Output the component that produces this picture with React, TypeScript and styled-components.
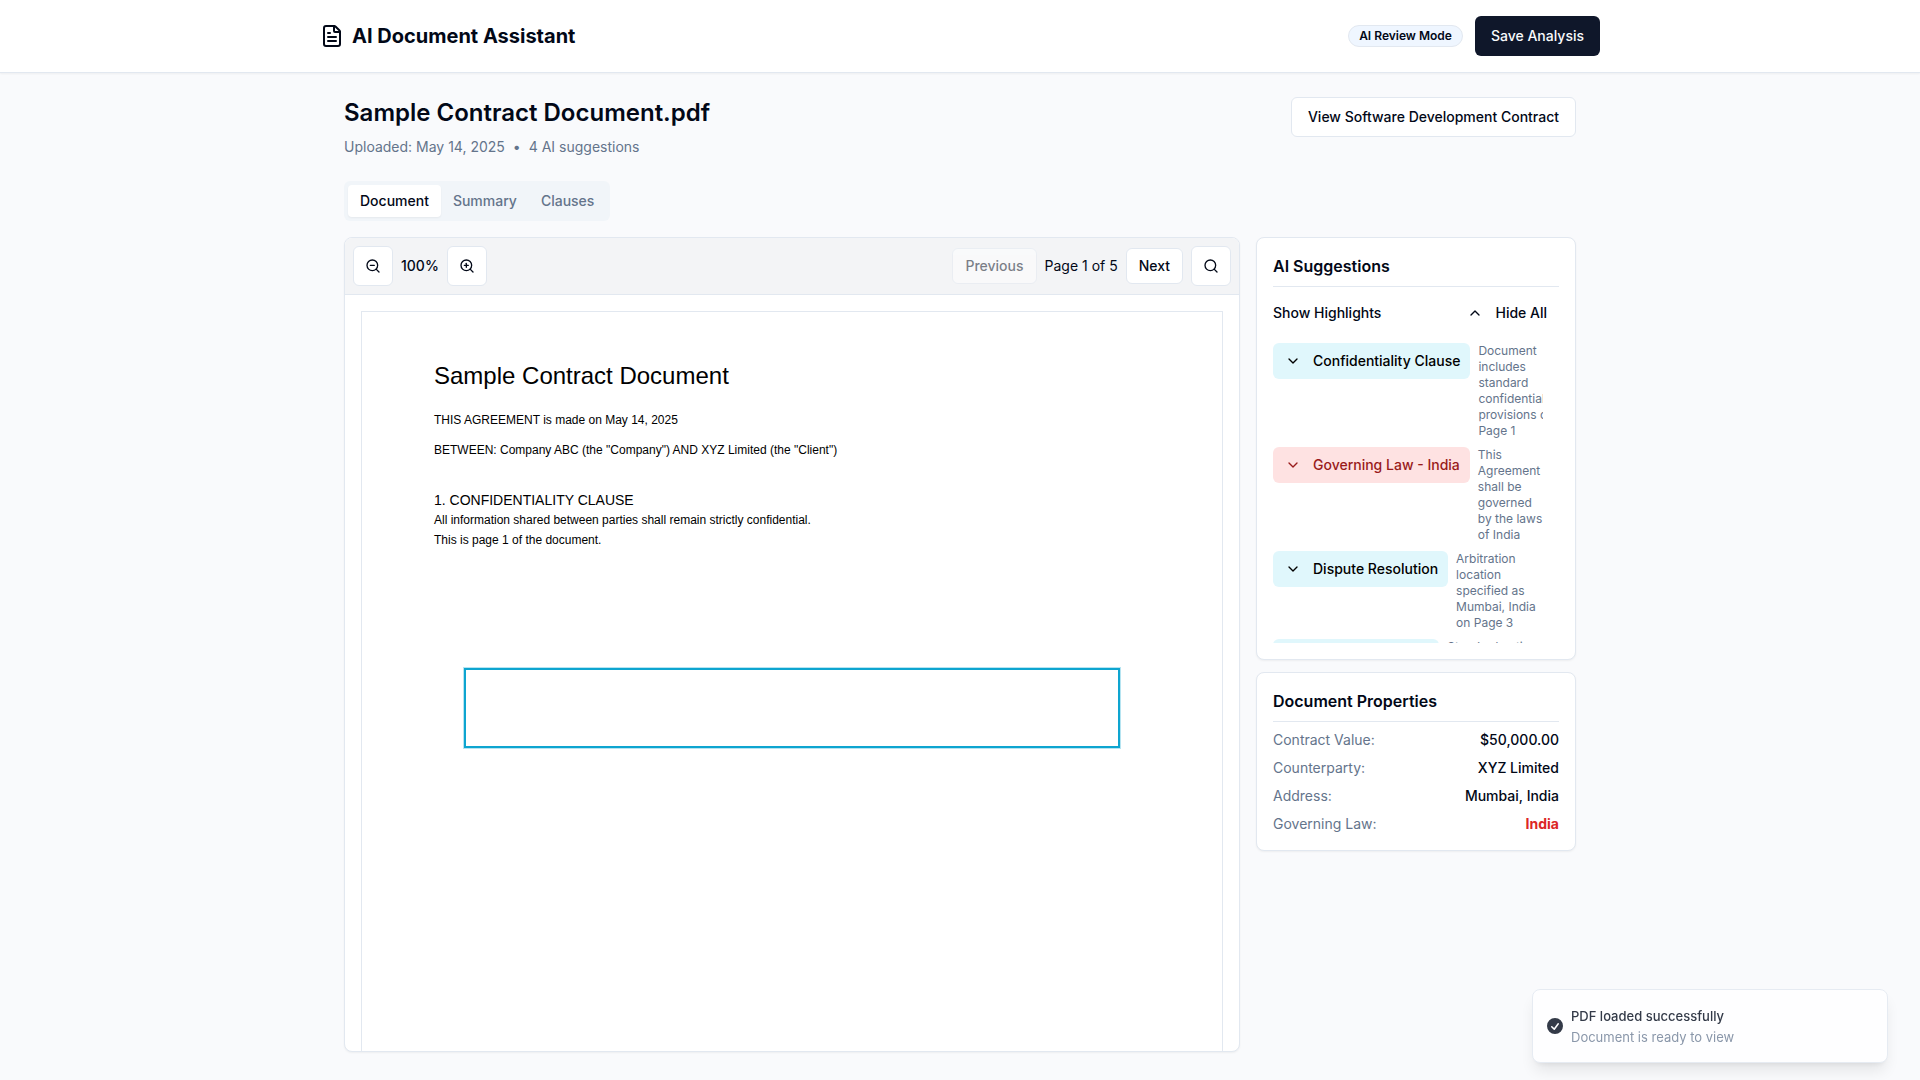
import React from "react";
import styled, { createGlobalStyle, css } from "styled-components";
import { ChevronDown, ChevronUp, FileText, Search, ZoomIn, ZoomOut } from "lucide-react";

const color = {
  page: "#f9fafc",
  surface: "#ffffff",
  ink: "#020817",
  navy: "#0f172a",
  muted: "#64748b",
  mutedSurface: "#f1f5f9",
  toolbar: "#f3f4f6",
  border: "#e2e8f0",
  badge: "#eff6ff",
  aqua: "#e0f7fc",
  rose: "#fee2e2",
  roseInk: "#991b1b",
  danger: "#dc2626",
  highlight: "#0ea5d0",
};

const GlobalStyle = createGlobalStyle`
  *, *::before, *::after { box-sizing: border-box; }
  body {
    margin: 0;
    background: ${color.page};
    color: ${color.ink};
    font-family: Inter, "Liberation Sans", sans-serif;
    font-size: 14px;
    line-height: 20px;
  }
  h1, h2, h3, p, dl, dd, ul { margin: 0; padding: 0; }
  button { font: inherit; color: inherit; cursor: pointer; }
`;

const Header = styled.header`
  background: ${color.surface};
  border-bottom: 1px solid ${color.border};
  box-shadow: 0 1px 2px rgba(0, 0, 0, 0.05);
`;

const HeaderInner = styled.div`
  display: flex;
  align-items: center;
  justify-content: space-between;
  max-width: 1280px;
  margin: 0 auto;
  padding: 16px 0;
`;

const Brand = styled.div`
  display: flex;
  align-items: center;
  gap: 8px;
`;

const BrandName = styled.h1`
  font-size: 20px;
  line-height: 28px;
  font-weight: 700;
`;

const HeaderActions = styled.div`
  display: flex;
  align-items: center;
  gap: 12px;
`;

const Badge = styled.span`
  padding: 2px 10px;
  border: 1px solid ${color.border};
  border-radius: 999px;
  background: ${color.badge};
  font-size: 12px;
  line-height: 16px;
  font-weight: 600;
`;

type Variant = "primary" | "outline" | "ghost" | "aqua" | "rose";

const variants = {
  primary: css`
    background: ${color.navy};
    border: 0;
    color: #f8fafc;
  `,
  outline: css`
    background: ${color.surface};
    border: 1px solid ${color.border};
  `,
  ghost: css`
    background: transparent;
    border: 0;
  `,
  aqua: css`
    background: ${color.aqua};
    border: 0;
    color: #000000;
  `,
  rose: css`
    background: ${color.rose};
    border: 0;
    color: ${color.roseInk};
  `,
};

const Button = styled.button<{ $variant: Variant; $size?: "small" | "regular" | "icon" }>`
  display: inline-flex;
  align-items: center;
  justify-content: center;
  flex-shrink: 0;
  gap: 12px;
  width: ${({ $size }) => ($size === "icon" ? "40px" : "auto")};
  height: ${({ $size }) => ($size === "small" ? "36px" : "40px")};
  padding: 0 ${({ $size }) => ($size === "icon" ? "0" : $size === "small" ? "12px" : "16px")};
  border-radius: 6px;
  font-weight: 500;
  white-space: nowrap;
  ${({ $variant }) => variants[$variant]}

  &:disabled {
    opacity: 0.5;
    cursor: default;
  }
`;

const SuggestionButton = styled(Button)`
  padding-right: 10px;
`;

const Main = styled.main`
  max-width: 1280px;
  margin: 0 auto;
  padding: 24px;
`;

const TitleRow = styled.div`
  display: flex;
  align-items: flex-start;
  justify-content: space-between;
  margin-bottom: 24px;
`;

const TitleBlock = styled.div`
  display: flex;
  flex-direction: column;
  gap: 8px;
`;

const DocumentTitle = styled.h2`
  font-size: 24px;
  line-height: 32px;
  font-weight: 600;
`;

const Meta = styled.p`
  display: flex;
  gap: 8px;
  color: ${color.muted};
`;

const TabList = styled.div`
  display: inline-flex;
  padding: 4px;
  margin-bottom: 16px;
  border-radius: 6px;
  background: ${color.mutedSurface};
  vertical-align: top;
`;

const Tab = styled.button<{ $active?: boolean }>`
  padding: 6px 12px;
  border: 0;
  border-radius: 4px;
  background: ${({ $active }) => ($active ? color.surface : "transparent")};
  box-shadow: ${({ $active }) => ($active ? "0 1px 2px rgba(0, 0, 0, 0.05)" : "none")};
  color: ${({ $active }) => ($active ? color.ink : color.muted)};
  font-weight: 500;
`;

const Workspace = styled.div`
  display: flex;
  align-items: flex-start;
  gap: 16px;
`;

const Card = styled.section`
  border: 1px solid ${color.border};
  border-radius: 8px;
  background: ${color.surface};
  box-shadow: 0 1px 2px rgba(0, 0, 0, 0.05);
`;

const Viewer = styled(Card)`
  display: flex;
  flex: 1;
  flex-direction: column;
  min-width: 0;
  height: calc(100vh - 265px);
  overflow: hidden;
`;

const Toolbar = styled.div`
  display: flex;
  align-items: center;
  justify-content: space-between;
  padding: 8px;
  border-bottom: 1px solid ${color.border};
  background: ${color.toolbar};
`;

const ToolGroup = styled.div`
  display: flex;
  align-items: center;
  gap: 8px;
`;

const ZoomLevel = styled.span`
  font-weight: 500;
`;

const PageScroller = styled.div`
  flex: 1;
  padding: 16px;
  overflow: auto;
  scrollbar-width: none;
`;

const Page = styled.article`
  position: relative;
  min-height: 1114px;
  padding: 48px 72px;
  border: 1px solid ${color.border};
  background: ${color.surface};
  color: #000000;
  font-family: "Liberation Sans", Arial, sans-serif;
  font-size: 12px;
  line-height: 20px;
`;

const PageTitle = styled.h3`
  margin-bottom: 18px;
  font-size: 24px;
  line-height: 32px;
  font-weight: 400;
`;

const Paragraph = styled.p`
  margin-bottom: 10px;
`;

const Clause = styled.div`
  padding-top: 20px;
`;

const ClauseTitle = styled.h3`
  font-size: 14px;
  line-height: 20px;
  font-weight: 400;
`;

const Highlight = styled.div`
  position: absolute;
  top: 356px;
  left: 102px;
  right: 102px;
  height: 80px;
  border: 2px solid ${color.highlight};
  box-shadow: 0 0 0 1px rgba(14, 165, 208, 0.3);
`;

const Sidebar = styled.aside`
  display: flex;
  flex-direction: column;
  flex-shrink: 0;
  gap: 12px;
  width: 320px;
`;

const Panel = styled(Card)`
  padding: 16px;
`;

const PanelTitle = styled.h3`
  padding-bottom: 8px;
  margin-bottom: 8px;
  border-bottom: 1px solid ${color.border};
  font-size: 16px;
  line-height: 24px;
  font-weight: 600;
`;

const HighlightRow = styled.div`
  display: flex;
  align-items: center;
  justify-content: space-between;
  margin-bottom: 12px;
  font-weight: 500;
`;

const SuggestionViewport = styled.div`
  height: 300px;
  margin-right: 16px;
  overflow: hidden;
`;

const SuggestionList = styled.ul`
  display: flex;
  flex-direction: column;
  gap: 8px;
  list-style: none;
`;

const Suggestion = styled.li`
  display: flex;
  align-items: flex-start;
  gap: 8px;
`;

const SuggestionText = styled.p`
  color: ${color.muted};
  font-size: 12px;
  line-height: 16px;
`;

const Properties = styled.dl`
  display: flex;
  flex-direction: column;
  gap: 8px;
`;

const Property = styled.div`
  display: flex;
  justify-content: space-between;
`;

const PropertyName = styled.dt`
  color: ${color.muted};
`;

const PropertyValue = styled.dd<{ $alert?: boolean }>`
  color: ${({ $alert }) => ($alert ? color.danger : color.ink)};
  font-weight: ${({ $alert }) => ($alert ? 700 : 500)};
`;

const Toast = styled.div`
  position: fixed;
  right: 32px;
  bottom: 17px;
  display: flex;
  align-items: center;
  gap: 6px;
  width: 356px;
  padding: 16px 12px;
  border: 1px solid #e6ebf2;
  border-radius: 8px;
  background: #fefeff;
  box-shadow: 0 10px 15px -3px rgba(0, 0, 0, 0.09), 0 4px 6px -4px rgba(0, 0, 0, 0.09);
  color: #333a48;
  font-size: 13px;
`;

const ToastBody = styled.div`
  display: flex;
  flex-direction: column;
  gap: 2px;
`;

const ToastTitle = styled.strong`
  font-weight: 500;
`;

const ToastText = styled.span`
  color: #8a97aa;
  line-height: 18px;
`;

const suggestions: { title: string; text: string; variant: Variant }[] = [
  {
    title: "Confidentiality Clause",
    text: "Document includes standard confidentiality provisions on Page 1",
    variant: "aqua",
  },
  {
    title: "Governing Law - India",
    text: "This Agreement shall be governed by the laws of India",
    variant: "rose",
  },
  {
    title: "Dispute Resolution",
    text: "Arbitration location specified as Mumbai, India on Page 3",
    variant: "aqua",
  },
  {
    title: "Entire Agreement",
    text: "Standard entire agreement clause on Page 5",
    variant: "aqua",
  },
];

const properties = [
  { name: "Contract Value:", value: "$50,000.00" },
  { name: "Counterparty:", value: "XYZ Limited" },
  { name: "Address:", value: "Mumbai, India" },
  { name: "Governing Law:", value: "India", alert: true },
];

function SuccessIcon() {
  return (
    <svg viewBox="0 0 20 20" width="20" height="20" fill="currentColor" aria-hidden="true">
      <path
        fillRule="evenodd"
        clipRule="evenodd"
        d="M10 18a8 8 0 100-16 8 8 0 000 16zm3.857-9.809a.75.75 0 00-1.214-.882l-3.483 4.79-1.88-1.88a.75.75 0 10-1.06 1.061l2.5 2.5a.75.75 0 001.137-.089l4-5.5z"
      />
    </svg>
  );
}

export default function App() {
  return (
    <>
      <GlobalStyle />
      <Header>
        <HeaderInner>
          <Brand>
            <FileText size={24} />
            <BrandName>AI Document Assistant</BrandName>
          </Brand>
          <HeaderActions>
            <Badge>AI Review Mode</Badge>
            <Button $variant="primary">Save Analysis</Button>
          </HeaderActions>
        </HeaderInner>
      </Header>

      <Main>
        <TitleRow>
          <TitleBlock>
            <DocumentTitle>Sample Contract Document.pdf</DocumentTitle>
            <Meta>
              <span>Uploaded: May 14, 2025</span>
              <span>•</span>
              <span>4 AI suggestions</span>
            </Meta>
          </TitleBlock>
          <Button $variant="outline">View Software Development Contract</Button>
        </TitleRow>

        <TabList role="tablist">
          <Tab role="tab" aria-selected="true" $active>Document</Tab>
          <Tab role="tab" aria-selected="false">Summary</Tab>
          <Tab role="tab" aria-selected="false">Clauses</Tab>
        </TabList>

        <Workspace>
          <Viewer>
            <Toolbar>
              <ToolGroup>
                <Button $variant="outline" $size="icon" aria-label="Zoom out">
                  <ZoomOut size={16} />
                </Button>
                <ZoomLevel>100%</ZoomLevel>
                <Button $variant="outline" $size="icon" aria-label="Zoom in">
                  <ZoomIn size={16} />
                </Button>
              </ToolGroup>
              <ToolGroup>
                <Button $variant="outline" $size="small" disabled>Previous</Button>
                <span>Page 1 of 5</span>
                <Button $variant="outline" $size="small">Next</Button>
                <Button $variant="outline" $size="icon" aria-label="Search">
                  <Search size={16} />
                </Button>
              </ToolGroup>
            </Toolbar>
            <PageScroller>
              <Page>
                <PageTitle>Sample Contract Document</PageTitle>
                <Paragraph>THIS AGREEMENT is made on May 14, 2025</Paragraph>
                <Paragraph>
                  BETWEEN: Company ABC (the "Company") AND XYZ Limited (the "Client")
                </Paragraph>
                <Clause>
                  <ClauseTitle>1. CONFIDENTIALITY CLAUSE</ClauseTitle>
                  <p>All information shared between parties shall remain strictly confidential.</p>
                  <p>This is page 1 of the document.</p>
                </Clause>
                <Highlight />
              </Page>
            </PageScroller>
          </Viewer>

          <Sidebar>
            <Panel>
              <PanelTitle>AI Suggestions</PanelTitle>
              <HighlightRow>
                <span>Show Highlights</span>
                <Button $variant="ghost" $size="small">
                  <ChevronUp size={16} />
                  Hide All
                </Button>
              </HighlightRow>
              <SuggestionViewport>
                <SuggestionList>
                  {suggestions.map((item) => (
                    <Suggestion key={item.title}>
                      <SuggestionButton $variant={item.variant} $size="small">
                        <ChevronDown size={16} />
                        {item.title}
                      </SuggestionButton>
                      <SuggestionText>{item.text}</SuggestionText>
                    </Suggestion>
                  ))}
                </SuggestionList>
              </SuggestionViewport>
            </Panel>

            <Panel>
              <PanelTitle>Document Properties</PanelTitle>
              <Properties>
                {properties.map((item) => (
                  <Property key={item.name}>
                    <PropertyName>{item.name}</PropertyName>
                    <PropertyValue $alert={item.alert}>{item.value}</PropertyValue>
                  </Property>
                ))}
              </Properties>
            </Panel>
          </Sidebar>
        </Workspace>
      </Main>

      <Toast role="status">
        <SuccessIcon />
        <ToastBody>
          <ToastTitle>PDF loaded successfully</ToastTitle>
          <ToastText>Document is ready to view</ToastText>
        </ToastBody>
      </Toast>
    </>
  );
}
